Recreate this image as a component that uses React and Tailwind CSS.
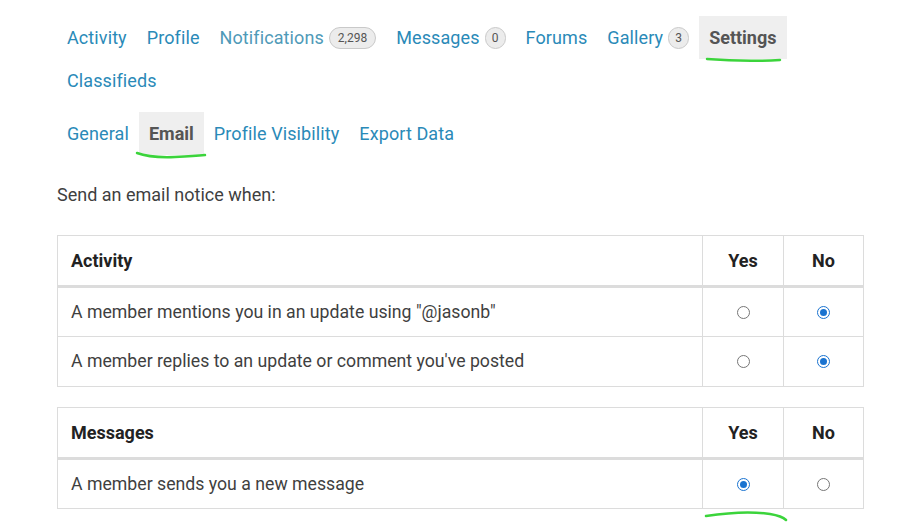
import { Fragment } from 'react'

const font = { fontFamily: 'Roboto, "Liberation Sans", sans-serif' }

function Badge({ children, wide }) {
  return (
    <span className={`ml-[5px] inline-flex h-[22px] items-center justify-center rounded-full border border-[#c9c9c9] bg-[#ececec] text-[12px] tracking-normal text-[#555] ${wide ? 'px-[8px]' : 'w-[21px]'}`}>
      {children}
    </span>
  )
}

function NavItem({ label, badge, wide, active, tone }) {
  return (
    <div className={`relative flex h-[43px] items-center px-[10px] text-[18px] tracking-[0.1px] ${active ? 'bg-[#efefef] font-bold tracking-normal text-[#555]' : tone || 'text-[#2a8ab8]'}`}>
      {label}
      {badge && <Badge wide={wide}>{badge}</Badge>}
    </div>
  )
}

function Radio({ checked }) {
  return checked ? (
    <span className="mx-auto flex h-[13px] w-[13px] items-center justify-center rounded-full border border-[#1a73d0] bg-white">
      <span className="h-[7px] w-[7px] rounded-full bg-[#1a73d0]" />
    </span>
  ) : (
    <span className="mx-auto block h-[13px] w-[13px] rounded-full border border-[#767676] bg-white" />
  )
}

function NoticeTable({ title, rows }) {
  return (
    <table className="w-full border-collapse border border-[#dcdcdc]">
      <thead>
        <tr className="h-[51px] border-b-[3px] border-[#dcdcdc] text-[18px]">
          <th className="pl-[13px] text-left font-bold text-[#222]">{title}</th>
          <th className="w-[81px] border-l border-[#dcdcdc] text-center font-bold text-[#222]">Yes</th>
          <th className="w-[80px] border-l border-[#dcdcdc] text-center font-bold text-[#222]">No</th>
        </tr>
      </thead>
      <tbody>
        {rows.map(r => (
          <tr key={r.text} className="h-[50px] border-b border-[#dcdcdc] text-[17.7px]">
            <td className="pl-[13px] text-[#3f3f3f]">{r.text}</td>
            <td className="border-l border-[#dcdcdc] align-middle"><Radio checked={r.yes} /></td>
            <td className="border-l border-[#dcdcdc] align-middle"><Radio checked={!r.yes} /></td>
          </tr>
        ))}
      </tbody>
    </table>
  )
}

export default function App() {
  return (
    <div className="relative h-[529px] w-[919px] overflow-hidden bg-white" style={font}>
      <div className="pl-[57px] pt-[16px]">
        {/* Main nav */}
        <div className="flex w-[760px] flex-wrap">
          <NavItem label="Activity" />
          <NavItem label="Profile" />
          <NavItem label="Notifications" badge="2,298" wide tone="text-[#4f9ab8]" />
          <NavItem label="Messages" badge="0" />
          <NavItem label="Forums" />
          <NavItem label="Gallery" badge="3" />
          <NavItem label="Settings" active />
          <NavItem label="Classifieds" />
        </div>

        {/* Sub nav */}
        <div className="mt-[10px] flex">
          <NavItem label="General" />
          <NavItem label="Email" active />
          <NavItem label="Profile Visibility" />
          <NavItem label="Export Data" />
        </div>
      </div>

      <div className="pl-[57px] pr-[55px]">
        <p className="mt-[26px] text-[18px] text-[#3f3f3f]">Send an email notice when:</p>

        <div className="mt-[27px]">
          <NoticeTable title="Activity" rows={[
            { text: 'A member mentions you in an update using "@jasonb"', yes: false },
            { text: "A member replies to an update or comment you've posted", yes: false },
          ]} />
        </div>
        <div className="mt-[20px]">
          <NoticeTable title="Messages" rows={[
            { text: 'A member sends you a new message', yes: true },
          ]} />
        </div>
      </div>

      {/* hand-drawn green underlines */}
      <svg className="pointer-events-none absolute left-0 top-0" width="919" height="529">
        <path d="M707 59 Q744 62 780 60" stroke="#3bd43b" strokeWidth="2.5" fill="none" strokeLinecap="round" />
        <path d="M137 153 Q150 158 175 157 Q195 156 205 155" stroke="#3bd43b" strokeWidth="2.5" fill="none" strokeLinecap="round" />
        <path d="M706 516 Q745 510 770 514 Q782 516 786 520" stroke="#3bd43b" strokeWidth="2.5" fill="none" strokeLinecap="round" />
      </svg>
    </div>
  )
}
